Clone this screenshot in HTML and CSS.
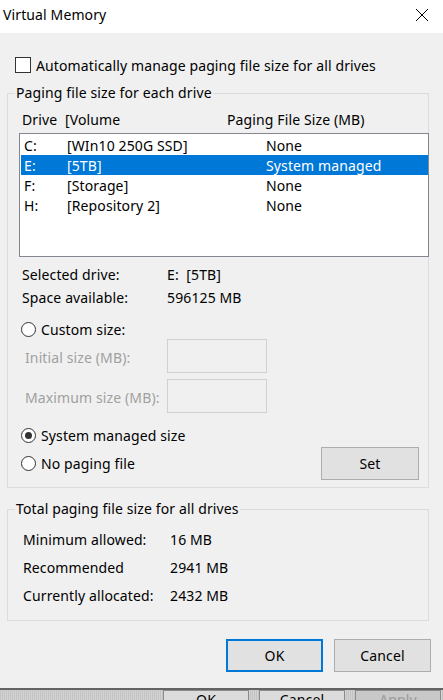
FILE: index.html
```html
<!DOCTYPE html>
<html lang="en">
<head>
    <meta charset="UTF-8">
    <title>Virtual Memory</title>
    <link rel="stylesheet" href="styles.css">
</head>
<body>
    <div class="window">
        <div class="titlebar">
            <span class="title">Virtual Memory</span>
            <svg class="close" width="14" height="14" viewBox="0 0 14 14">
                <path d="M1 1 L13 13 M13 1 L1 13" stroke="#000" stroke-width="1" fill="none"/>
            </svg>
        </div>

        <div class="content">
            <label class="check-row">
                <span class="checkbox"></span>
                <span>Automatically manage paging file size for all drives</span>
            </label>

            <fieldset class="group drives">
                <legend>Paging file size for each drive</legend>

                <div class="list-head">
                    <span>Drive</span>
                    <span>[Volume</span>
                    <span>Paging File Size (MB)</span>
                </div>

                <div class="listbox">
                    <div class="row"><span>C:</span><span>[WIn10 250G SSD]</span><span>None</span></div>
                    <div class="row selected"><span>E:</span><span>[5TB]</span><span>System managed</span></div>
                    <div class="row"><span>F:</span><span>[Storage]</span><span>None</span></div>
                    <div class="row"><span>H:</span><span>[Repository 2]</span><span>None</span></div>
                </div>

                <div class="info">
                    <div class="info-row"><span>Selected drive:</span><span>E:&nbsp; [5TB]</span></div>
                    <div class="info-row"><span>Space available:</span><span>596125 MB</span></div>
                </div>

                <label class="radio-row custom">
                    <span class="radio"></span>
                    <span>Custom size:</span>
                </label>

                <div class="size-row first">
                    <span class="disabled">Initial size (MB):</span>
                    <span class="textbox"></span>
                </div>
                <div class="size-row">
                    <span class="disabled">Maximum size (MB):</span>
                    <span class="textbox"></span>
                </div>

                <label class="radio-row managed">
                    <span class="radio checked"></span>
                    <span>System managed size</span>
                </label>

                <div class="nopage-row">
                    <label class="radio-row">
                        <span class="radio"></span>
                        <span>No paging file</span>
                    </label>
                    <button class="btn set">Set</button>
                </div>
            </fieldset>

            <fieldset class="group totals">
                <legend>Total paging file size for all drives</legend>
                <div class="total-row"><span>Minimum allowed:</span><span>16 MB</span></div>
                <div class="total-row"><span>Recommended</span><span>2941 MB</span></div>
                <div class="total-row"><span>Currently allocated:</span><span>2432 MB</span></div>
            </fieldset>

            <div class="actions">
                <button class="btn default">OK</button>
                <button class="btn">Cancel</button>
            </div>
        </div>

        <div class="behind">
            <span class="bbtn">OK</span>
            <span class="bbtn">Cancel</span>
            <span class="bbtn off">Apply</span>
        </div>
    </div>
</body>
</html>
```

FILE: styles.css
```css
body {
    margin: 0;
    font-family: 'Noto Sans', sans-serif;
    font-size: 14px;
    letter-spacing: 0.12px;
    color: #000;
    background: #f0f0f0;
}

.window {
    width: 443px;
    height: 700px;
    overflow: hidden;
    display: flex;
    flex-direction: column;
}

.titlebar {
    height: 33px;
    flex-shrink: 0;
    background: #fff;
    display: flex;
    align-items: center;
    justify-content: space-between;
    padding: 0 14px 4px 3px;
    box-sizing: border-box;
}

.title {
    font-size: 14px;
}

.content {
    height: 655px;
    flex-shrink: 0;
    background: #f0f0f0;
    padding: 0 15px 0 7px;
    box-sizing: border-box;
}

.check-row {
    display: flex;
    align-items: center;
    gap: 5px;
    height: 20px;
    margin: 22px 0 0 8px;
}

.checkbox {
    width: 14px;
    height: 14px;
    border: 1px solid #333;
    background: #fff;
}

.group {
    margin: 0;
    padding: 0;
    min-width: 0;
    border: 1px solid #dcdcdc;
    width: 422px;
    box-sizing: border-box;
}

.group legend {
    padding: 0 1px;
    line-height: 20px;
}

.drives {
    margin-top: 8px;
    padding: 0 0 7px 11px;
}

.drives legend {
    margin-left: -4px;
}

.list-head {
    display: grid;
    grid-template-columns: 43px 162px 1fr;
    height: 20px;
    align-items: center;
    margin-top: 6px;
    padding-left: 3px;
}

.listbox {
    margin: 4px -1px 0 0;
    height: 124px;
    border: 1px solid #828790;
    background: #fff;
    box-sizing: border-box;
    padding: 1px 0 0 1px;
}

.row {
    display: grid;
    grid-template-columns: 43px 199px 1fr;
    height: 20px;
    align-items: center;
    padding-left: 3px;
}

.row.selected {
    background: #0078d7;
    color: #fff;
}

.info {
    margin-top: 6px;
}

.info-row {
    display: grid;
    grid-template-columns: 145px 1fr;
    height: 23px;
    align-items: center;
    padding-left: 3px;
}

.radio-row {
    display: flex;
    align-items: center;
    gap: 5px;
    height: 20px;
    padding-left: 2px;
}

.radio {
    width: 13px;
    height: 13px;
    border: 1px solid #333;
    border-radius: 50%;
    background: #fff;
    display: flex;
    align-items: center;
    justify-content: center;
}

.radio.checked::after {
    content: "";
    width: 7px;
    height: 7px;
    border-radius: 50%;
    background: #333;
}

.custom {
    margin-top: 10px;
}

.size-row {
    display: grid;
    grid-template-columns: 142px 100px;
    align-items: center;
    height: 34px;
    padding-left: 6px;
}

.size-row.first {
    margin-bottom: 6px;
}

.disabled {
    color: #a0a0a0;
    padding-top: 3px;
}

.textbox {
    height: 34px;
    border: 1px solid #d0d0d0;
    box-sizing: border-box;
}

.managed {
    margin-top: 12px;
}

.nopage-row {
    display: flex;
    align-items: center;
    justify-content: space-between;
    margin-top: 2px;
    padding-right: 9px;
}

.btn {
    font-family: inherit;
    font-size: 14px;
    letter-spacing: inherit;
    color: #000;
    background: #e1e1e1;
    border: 1px solid #adadad;
    height: 33px;
    width: 98px;
    padding: 0;
}

.totals {
    margin-top: 11px;
    padding: 6px 0 11px 15px;
}

.totals legend {
    margin-left: -8px;
}

.total-row {
    display: grid;
    grid-template-columns: 147px 1fr;
    height: 28px;
    align-items: center;
}

.actions {
    display: flex;
    justify-content: flex-end;
    gap: 11px;
    margin: 18px -3px 0 0;
}

.actions .btn {
    width: 97px;
}

.btn.default {
    border: 2px solid #0078d7;
}

.behind {
    flex: 1;
    border-top: 2px solid #646464;
    background: repeating-linear-gradient(90deg, #c4c4c4 0 1px, #d2d2d2 1px 2px);
    display: flex;
    padding-left: 163px;
    gap: 10px;
}

.bbtn {
    width: 84px;
    height: 16px;
    border: 1px solid #8c8c8c;
    border-bottom: none;
    background: #dcdcdc;
    text-align: center;
    line-height: 18px;
    font-size: 14px;
}

.bbtn.off {
    color: #9a9a9a;
    background: #c8c8c8;
}
```
